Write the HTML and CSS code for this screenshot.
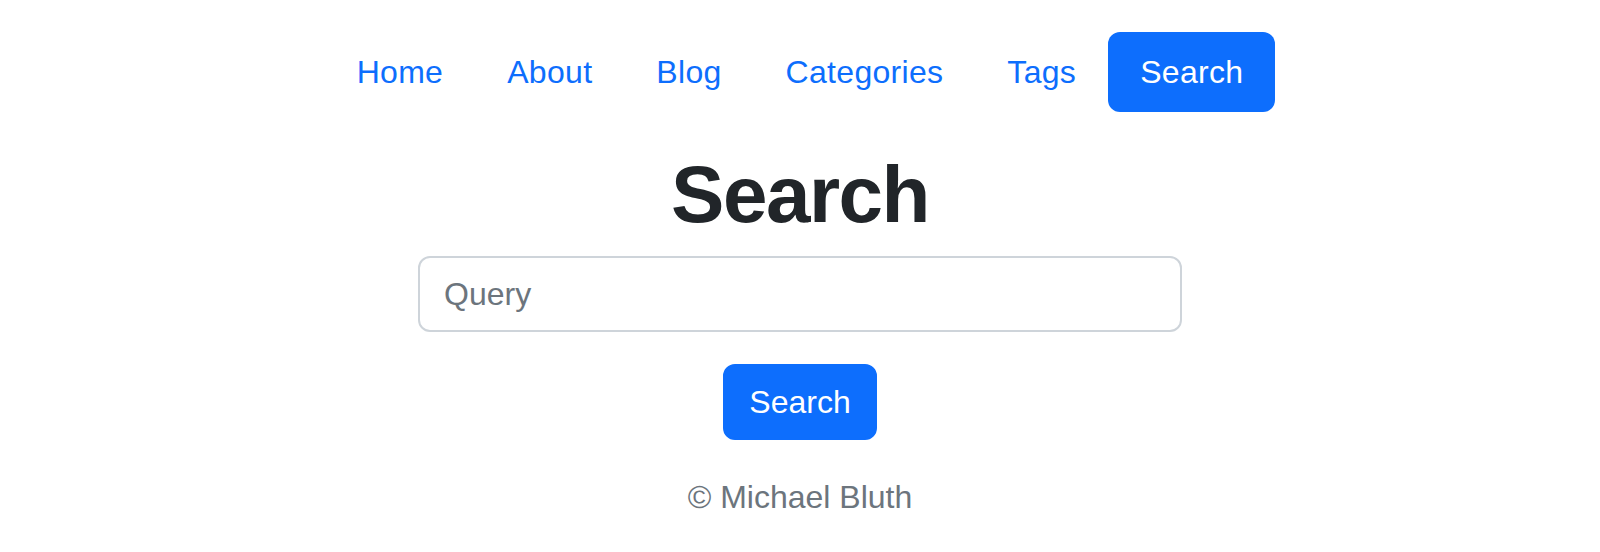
FILE: index.html
```html
<!DOCTYPE html>
<html lang="en">
<head>
<meta charset="utf-8">
<title>Search</title>
<link rel="stylesheet" href="styles.css">
</head>
<body>
<header class="site-header">
  <nav class="nav">
    <a class="nav-link" href="#">Home</a>
    <a class="nav-link" href="#">About</a>
    <a class="nav-link" href="#">Blog</a>
    <a class="nav-link" href="#">Categories</a>
    <a class="nav-link" href="#">Tags</a>
    <a class="nav-link active" href="#">Search</a>
  </nav>
</header>
<main class="content">
  <h1 class="title">Search</h1>
  <form class="search-form">
    <input class="query" type="text" placeholder="Query">
    <button class="btn" type="submit">Search</button>
  </form>
</main>
<footer class="footer">© Michael Bluth</footer>
</body>
</html>
```

FILE: styles.css
```css
* { box-sizing: border-box; }
html, body { margin: 0; padding: 0; background: #fff; }
body {
  font-family: "Liberation Sans", Arial, Helvetica, sans-serif;
  font-size: 32px;
  line-height: 1.5;
  color: #212529;
}
.site-header {
  padding-top: 32px;
  display: flex;
  justify-content: center;
}
.nav {
  display: flex;
}
.nav-link {
  display: block;
  padding: 16px 32px;
  color: #0d6efd;
  text-decoration: none;
  letter-spacing: 0.3px;
  border-radius: 12px;
}
.nav-link.active {
  background: #0d6efd;
  color: #fff;
}
.content {
  display: flex;
  flex-direction: column;
  align-items: center;
}
.title {
  font-size: 80px;
  font-weight: 700;
  line-height: 1.2;
  letter-spacing: -1.5px;
  margin: 35px 0 13px;
}
.search-form {
  display: flex;
  flex-direction: column;
  align-items: center;
  gap: 32px;
}
.query {
  width: 764px;
  height: 76px;
  padding: 12px 24px;
  font: inherit;
  color: #212529;
  border: 2px solid #ced4da;
  border-radius: 12px;
  outline: none;
}
.query::placeholder { color: #6c757d; opacity: 1; }
.btn {
  font: inherit;
  color: #fff;
  background: #0d6efd;
  border: 2px solid #0d6efd;
  border-radius: 12px;
  padding: 12px 24px;
  cursor: pointer;
}
.footer {
  margin-top: 33px;
  text-align: center;
  color: #6c757d;
}
```
